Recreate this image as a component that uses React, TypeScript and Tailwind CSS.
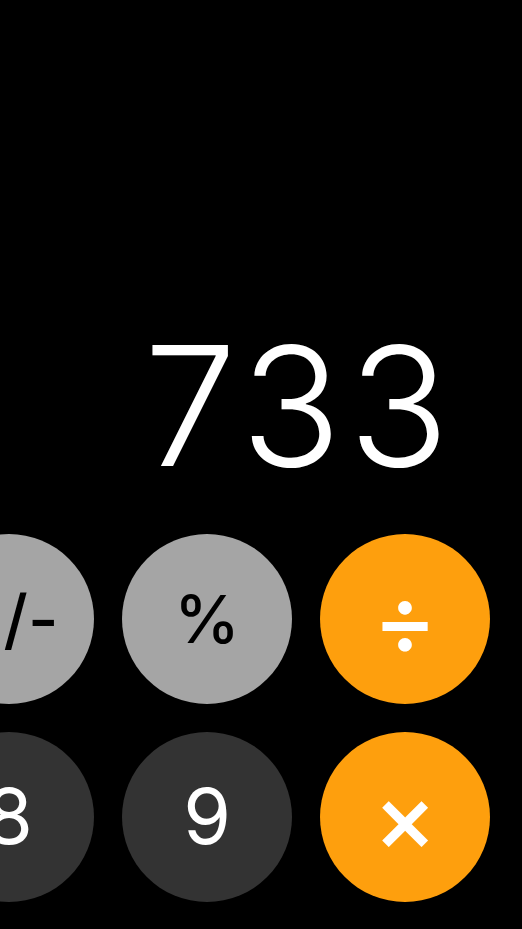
import React from 'react'

type Key = {
  label: string
  kind: 'fn' | 'num' | 'op'
}

const rows: Key[][] = [
  [
    { label: 'AC', kind: 'fn' },
    { label: '+/-', kind: 'fn' },
    { label: '%', kind: 'fn' },
    { label: '÷', kind: 'op' },
  ],
  [
    { label: '7', kind: 'num' },
    { label: '8', kind: 'num' },
    { label: '9', kind: 'num' },
    { label: '×', kind: 'op' },
  ],
]

function CalcKey({ k }: { k: Key }) {
  const base =
    'w-[170px] h-[170px] shrink-0 rounded-full flex items-center justify-center select-none'
  if (k.kind === 'fn') {
    return (
      <button className={`${base} bg-[#a5a5a5] text-black text-[66px] font-medium`}>
        {k.label}
      </button>
    )
  }
  if (k.kind === 'op') {
    return (
      <button className={`${base} bg-[#fe9f0d] text-white text-[96px] font-medium`}>
        {k.label}
      </button>
    )
  }
  return (
    <button className={`${base} bg-[#333333] text-white text-[77px] font-normal`}>
      {k.label}
    </button>
  )
}

export default function App() {
  return (
    <div
      className="w-[522px] h-[929px] bg-black overflow-hidden flex flex-col"
      style={{ fontFamily: 'Inter, "Noto Sans", sans-serif' }}
    >
      {/* Display */}
      <div className="flex-1 flex items-end justify-end pr-[66px] pb-[45px]">
        <div className="text-white text-[166px] font-light leading-none tracking-[7px]">733</div>
      </div>

      {/* Keypad */}
      <div className="flex flex-col gap-[28px] pb-[27px]">
        {rows.map((row, i) => (
          <div key={i} className="flex justify-end gap-[28px] pr-[32px]">
            {row.map((k) => (
              <CalcKey key={k.label} k={k} />
            ))}
          </div>
        ))}
      </div>
    </div>
  )
}
